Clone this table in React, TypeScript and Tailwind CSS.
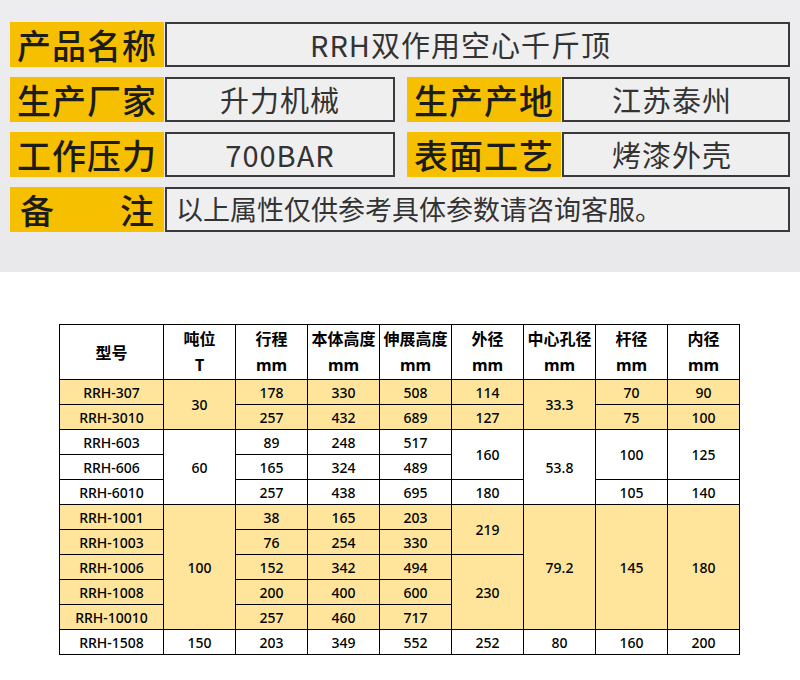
const cjk = { fontFamily: '"Noto Sans CJK SC", "Noto Sans", sans-serif' };
const num = { fontFamily: '"Noto Sans", "Noto Sans CJK SC", sans-serif' };

function Label({ text, spread }: { text: string; spread?: boolean }) {
  if (spread) {
    return (
      <div className="w-[154px] h-[45px] shrink-0 bg-[#f6bf00] flex items-center justify-between px-[10px] text-[34px] font-medium text-[#1c1c1c]">
        {text.split("").map((c, i) => (
          <span key={i}>{c}</span>
        ))}
      </div>
    );
  }
  return (
    <div className="w-[154px] h-[45px] shrink-0 bg-[#f6bf00] flex items-center justify-center text-[34px] font-medium text-[#1c1c1c] tracking-[1px]">
      {text}
    </div>
  );
}

function Box({ text, w, left, extra }: { text: string; w?: string; left?: boolean; extra?: string }) {
  return (
    <div
      className={`${w ?? "flex-1"} h-[45px] ml-px border-2 border-[#3a3a3a] bg-[#efeff0] flex items-center text-[#333] ${
        left ? "justify-start pl-[9px] text-[27px]" : "justify-center text-[29px] tracking-[1px]"
      } ${extra ?? ""}`}
    >
      {text}
    </div>
  );
}

type Cell = { v: string; rs?: number };
type Row = { y: boolean; cells: Cell[] };

const rows: Row[] = [
  { y: true, cells: [{ v: "RRH-307" }, { v: "30", rs: 2 }, { v: "178" }, { v: "330" }, { v: "508" }, { v: "114" }, { v: "33.3", rs: 2 }, { v: "70" }, { v: "90" }] },
  { y: true, cells: [{ v: "RRH-3010" }, { v: "257" }, { v: "432" }, { v: "689" }, { v: "127" }, { v: "75" }, { v: "100" }] },
  { y: false, cells: [{ v: "RRH-603" }, { v: "60", rs: 3 }, { v: "89" }, { v: "248" }, { v: "517" }, { v: "160", rs: 2 }, { v: "53.8", rs: 3 }, { v: "100", rs: 2 }, { v: "125", rs: 2 }] },
  { y: false, cells: [{ v: "RRH-606" }, { v: "165" }, { v: "324" }, { v: "489" }] },
  { y: false, cells: [{ v: "RRH-6010" }, { v: "257" }, { v: "438" }, { v: "695" }, { v: "180" }, { v: "105" }, { v: "140" }] },
  { y: true, cells: [{ v: "RRH-1001" }, { v: "100", rs: 5 }, { v: "38" }, { v: "165" }, { v: "203" }, { v: "219", rs: 2 }, { v: "79.2", rs: 5 }, { v: "145", rs: 5 }, { v: "180", rs: 5 }] },
  { y: true, cells: [{ v: "RRH-1003" }, { v: "76" }, { v: "254" }, { v: "330" }] },
  { y: true, cells: [{ v: "RRH-1006" }, { v: "152" }, { v: "342" }, { v: "494" }, { v: "230", rs: 3 }] },
  { y: true, cells: [{ v: "RRH-1008" }, { v: "200" }, { v: "400" }, { v: "600" }] },
  { y: true, cells: [{ v: "RRH-10010" }, { v: "257" }, { v: "460" }, { v: "717" }] },
  { y: false, cells: [{ v: "RRH-1508" }, { v: "150" }, { v: "203" }, { v: "349" }, { v: "552" }, { v: "252" }, { v: "80" }, { v: "160" }, { v: "200" }] },
];

const heads: [string, string][] = [
  ["吨位", "T"],
  ["行程", "mm"],
  ["本体高度", "mm"],
  ["伸展高度", "mm"],
  ["外径", "mm"],
  ["中心孔径", "mm"],
  ["杆径", "mm"],
  ["内径", "mm"],
];

export default function App() {
  return (
    <div className="w-[800px] h-[680px] bg-white overflow-hidden" style={cjk}>
      {/* spec panel */}
      <div className="h-[272px] bg-gradient-to-b from-[#ededef] to-[#e9e9eb] px-[10px] pt-[22px] flex flex-col gap-[10px]">
        <div className="flex">
          <Label text="产品名称" />
          <Box text="RRH双作用空心千斤顶" extra="pr-[34px]" />
        </div>
        <div className="flex">
          <Label text="生产厂家" />
          <Box text="升力机械" w="w-[230px]" />
          <div className="w-[12px]" />
          <Label text="生产产地" />
          <Box text="江苏泰州" extra="pr-[8px]" />
        </div>
        <div className="flex">
          <Label text="工作压力" />
          <Box text="700BAR" w="w-[230px]" />
          <div className="w-[12px]" />
          <Label text="表面工艺" />
          <Box text="烤漆外壳" extra="pr-[8px]" />
        </div>
        <div className="flex">
          <Label text="备注" spread />
          <Box text="以上属性仅供参考具体参数请咨询客服。" left />
        </div>
      </div>

      {/* model table */}
      <div className="pt-[52px] pl-[59px]">
        <table className="table-fixed border-collapse w-[680px] text-black">
          <colgroup>
            <col className="w-[104px]" />
            {heads.map((_, i) => (
              <col key={i} className="w-[72px]" />
            ))}
          </colgroup>
          <thead>
            <tr>
              <th className="h-[53px] p-0 border border-black text-[16px] font-bold text-center align-middle">型号</th>
              {heads.map(([a, b]) => (
                <th key={a} className="h-[53px] p-0 border border-black text-[16px] font-bold text-center align-middle leading-[27px]">
                  <div>{a}</div>
                  <div style={num}>{b}</div>
                </th>
              ))}
            </tr>
          </thead>
          <tbody style={num}>
            {rows.map((r, i) => (
              <tr key={i} className={r.y ? "bg-[#ffe59b]" : "bg-white"}>
                {r.cells.map((c, j) => (
                  <td
                    key={j}
                    rowSpan={c.rs}
                    className="h-[25px] p-0 border border-black text-center align-middle text-[14px] font-medium leading-[23px]"
                  >
                    {c.v}
                  </td>
                ))}
              </tr>
            ))}
          </tbody>
        </table>
      </div>
    </div>
  );
}
